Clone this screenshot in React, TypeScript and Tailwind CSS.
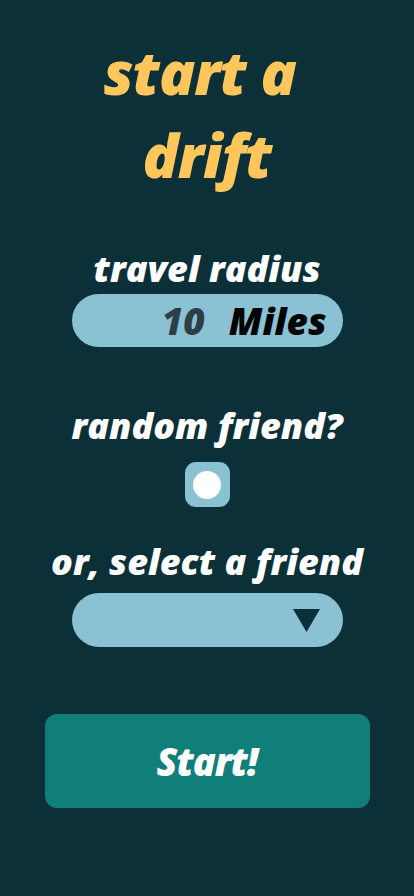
export default function App() {
  return (
    <div
      className="min-h-[896px] w-full bg-[#0c3038] flex flex-col items-center italic font-extrabold"
      style={{ fontFamily: '"Open Sans", sans-serif' }}
    >
      <h1 className="mt-[31px] text-center text-[60px] leading-[83px] text-[#ffc65c] tracking-[-1px]">
        start a{"\u00a0"}
        <br />
        drift
      </h1>

      <div className="mt-[49px] text-[36px] leading-[46px] text-white">travel radius</div>
      <div className="mt-[2px] w-[271px] h-[53px] rounded-full bg-[#8ac1d3] flex items-center justify-end pr-[16px]">
        <span className="text-[37px] text-[#2c3e46] mr-[24px]">10</span>
        <span className="text-[37px] text-black">Miles</span>
      </div>

      <div className="mt-[56px] text-[36px] leading-[46px] text-white">random friend?</div>
      <div className="mt-[13px] w-[45px] h-[45px] rounded-[11px] bg-[#8ac1d3] flex items-center justify-center">
        <div className="w-[28px] h-[28px] rounded-full bg-white" />
      </div>

      <div className="mt-[32px] text-[36px] leading-[46px] text-white">or, select a friend</div>
      <div className="mt-[8px] w-[271px] h-[54px] rounded-full bg-[#8ac1d3] flex items-center justify-end pr-[23px]">
        <svg width="27" height="23" viewBox="0 0 27 23">
          <polygon points="0,0 27,0 13.5,23" fill="#0c3038" />
        </svg>
      </div>

      <button className="mt-[67px] w-[325px] h-[94px] rounded-[12px] bg-[#107f7a] text-white text-[38px] italic font-extrabold tracking-[-1px]">
        Start!
      </button>
    </div>
  );
}
